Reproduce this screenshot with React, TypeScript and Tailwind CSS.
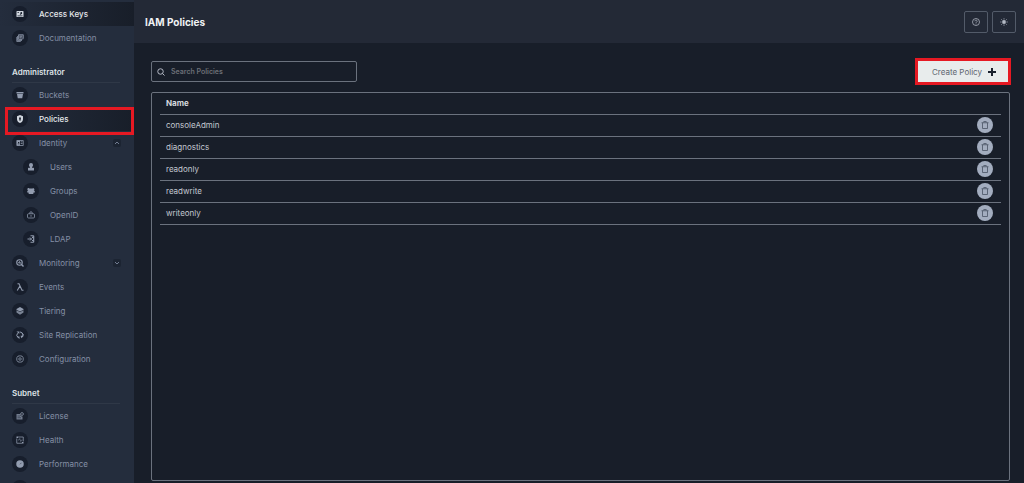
import { type ReactNode } from 'react';
import clsx from 'clsx';

interface NavItem {
  label: string;
  icon: IconName;
  active?: boolean;
  marked?: boolean;
  iconOnly?: boolean;
  toggle?: 'open' | 'closed';
  children?: NavItem[];
}

interface NavGroup {
  title?: string;
  items: NavItem[];
}

const stroke = { fill: 'none', stroke: 'currentColor', strokeWidth: 1.5 } as const;

const icons = {
  accessKeys: (
    <path
      fillRule="evenodd"
      d="M2 2h12a1 1 0 0 1 1 1v10a1 1 0 0 1-1 1H2a1 1 0 0 1-1-1V3a1 1 0 0 1 1-1Zm1 2v1.500h3V4H3Zm7.500.2a2 2 0 0 0-1.600 3.200L7.500 8.800l1 1 1.500-1.500a2 2 0 1 0 .5-4.100ZM3 11v1.300h10V11H3Z"
    />
  ),
  docs: (
    <>
      <path d="M5 1h10v10H5z" opacity="0.35" />
      <path {...stroke} d="M5 1.500h9.500v7l-2.500 2.500H5zM3 4v9h9M1.500 6v9h8M7 4.500h5M7 7.500h4" />
    </>
  ),
  bucket: <path d="M1 2h14v3H1zM2 6h12l-1.500 8.500h-9z" />,
  policy: (
    <path
      fillRule="evenodd"
      d="M8 0l6 2.500v6c0 4-3 6.500-6 7.500-3-1-6-3.500-6-7.500v-6L8 0Zm0 4.500a2 2 0 0 0-1.200 3.600L6.300 11h3.400l-.5-2.900A2 2 0 0 0 8 4.500Z"
    />
  ),
  identity: (
    <>
      <path {...stroke} d="M1.500 3h13v10h-13z" />
      <path d="M2 3h6v10H2zM9.500 5H13v1.500H9.500zM9.500 8H13v1.500H9.500z" />
      <path className="text-[#171e2c]" fill="currentColor" d="M4 6h2.500v2H4zM3.500 9H7v1.500H3.500z" />
    </>
  ),
  user: (
    <path d="M8 0a4 4 0 0 1 4 4c0 2-1 3.300-2 4v1.500h3a1 1 0 0 1 1 1V15H2v-4.500a1 1 0 0 1 1-1h3V8C5 7.300 4 6 4 4a4 4 0 0 1 4-4Z" />
  ),
  groups: (
    <path d="M3.500 2A2.200 2.200 0 0 1 5.700 4a3 3 0 0 1 4.600 0 2.200 2.200 0 1 1 3.200 2.500L15.500 8v3H13l-.5 3h-9L3 11H.5V8l2-1.500A2.300 2.300 0 0 1 3.500 2Z" />
  ),
  openId: (
    <path
      {...stroke}
      d="M5.500 5.500V4a2.500 2.500 0 0 1 5 0v1.500M3 5.500h10a2 2 0 0 1 2 2v4.500a2 2 0 0 1-2 2H3a2 2 0 0 1-2-2V7.500a2 2 0 0 1 2-2ZM8 8v3.500"
    />
  ),
  ldap: (
    <>
      <path {...stroke} strokeWidth="2" d="M7 1.500h6.500v13H7M1 8h8M6 5l3 3-3 3M10 5h3M10 11h3" />
      <path d="M10.500 2H14v12h-2V8z" opacity="0.6" />
    </>
  ),
  monitoring: (
    <>
      <circle cx="7" cy="7" r="5.500" {...stroke} strokeWidth="2.200" />
      <path {...stroke} strokeWidth="2.800" d="M11 11l4 4" />
      <path {...stroke} strokeWidth="2" d="M4 7.500h1.500L7 5l1 4 1-1.500h1.500" />
    </>
  ),
  events: <path {...stroke} strokeWidth="2.200" d="M3 1.500h3l6 13h3M7.800 6L2.500 15" />,
  tiering: (
    <>
      <path d="M8 0l7 4v1.500L8 9 1 5.500V4z" />
      <path d="M1 6.500l7 3.500 7-3.500V11l-7 4.500L1 11z" opacity="0.8" />
    </>
  ),
  replication: (
    <>
      <path {...stroke} strokeWidth="2" d="M4.500 13A6 6 0 0 1 3 4.500M7.500 2a6 6 0 0 1 6 7M11.500 3A6 6 0 0 1 13 11.500" />
      <path d="M1 11h6v5zM9 9.500h6.500l-4.500 5zM1 1h5.500v5z" />
    </>
  ),
  settings: (
    <>
      <path
        {...stroke}
        d="M8 1l1.800 1.200 2.200-.2.800 2.100 1.900 1.200L14.200 8l.5 2.700-1.900 1.200L12 14l-2.200-.2L8 15l-1.800-1.200L4 14l-.8-2.100-1.900-1.200L1.800 8l-.5-2.700 1.900-1.200L4 2l2.200.2z"
      />
      <circle cx="8" cy="8" r="2.500" {...stroke} />
    </>
  ),
  license: (
    <>
      <path d="M1 4h7.500A4 4 0 0 0 13 9v6H1z" opacity="0.75" />
      <circle cx="12" cy="4" r="2.800" {...stroke} />
      <path {...stroke} className="text-[#171e2c]" strokeWidth="1" d="M3 8h5M3 11.500h7" />
    </>
  ),
  health: (
    <>
      <path {...stroke} d="M4 2h10.500v9M12 14.500H1.500V5" />
      <path {...stroke} d="M4 8h2l1.500-3 2 6L11 8h2" opacity="0.6" />
      <path d="M1 1h3v3H1zM12 12h3v3h-3z" />
    </>
  ),
  performance: (
    <>
      <circle cx="8" cy="8" r="7.500" />
      <path {...stroke} className="text-[#171e2c]" strokeWidth="1" d="M8 8.500L11 5.500" />
    </>
  ),
  profile: <circle cx="8" cy="8" r="6.500" {...stroke} />,
} satisfies Record<string, ReactNode>;

type IconName = keyof typeof icons;

const navGroups: NavGroup[] = [
  {
    items: [
      { label: 'Access Keys', icon: 'accessKeys', active: true },
      { label: 'Documentation', icon: 'docs' },
    ],
  },
  {
    title: 'Administrator',
    items: [
      { label: 'Buckets', icon: 'bucket' },
      { label: 'Policies', icon: 'policy', active: true, marked: true },
      {
        label: 'Identity',
        icon: 'identity',
        toggle: 'open',
        children: [
          { label: 'Users', icon: 'user' },
          { label: 'Groups', icon: 'groups' },
          { label: 'OpenID', icon: 'openId' },
          { label: 'LDAP', icon: 'ldap' },
        ],
      },
      { label: 'Monitoring', icon: 'monitoring', toggle: 'closed' },
      { label: 'Events', icon: 'events' },
      { label: 'Tiering', icon: 'tiering' },
      { label: 'Site Replication', icon: 'replication' },
      { label: 'Configuration', icon: 'settings' },
    ],
  },
  {
    title: 'Subnet',
    items: [
      { label: 'License', icon: 'license' },
      { label: 'Health', icon: 'health' },
      { label: 'Performance', icon: 'performance' },
      { label: 'Profile', icon: 'profile', iconOnly: true },
    ],
  },
];

const policies = ['consoleAdmin', 'diagnostics', 'readonly', 'readwrite', 'writeonly'];

export default function App() {
  return (
    <div className="flex h-screen overflow-hidden bg-[#181e29] font-['Inter',sans-serif] text-[8px] leading-3 text-[#c3c8d0]">
      <Sidebar />
      <main className="flex min-w-0 flex-1 flex-col">
        <PageHeader />
        <div className="flex min-h-0 flex-1 flex-col gap-2.5 pt-[18px] pr-3.5 pb-0.5 pl-[17px]">
          <Toolbar />
          <PolicyTable />
        </div>
      </main>
    </div>
  );
}

const Sidebar = () => (
  <nav className="w-[134px] shrink-0 bg-[#242d3d] pt-0.5">
    {navGroups.map((group, idx) => (
      <section key={idx}>
        {group.title && (
          <h2 className="mr-3.5 ml-3 flex h-[33px] items-end border-b border-[#2f3847] pb-1 font-semibold text-[#dde1e6]">
            {group.title}
          </h2>
        )}
        <NavList items={group.items} />
      </section>
    ))}
  </nav>
);

const NavList = ({ items, nested }: { items: NavItem[]; nested?: boolean }) => (
  <ul>
    {items.map(item => (
      <li key={item.label} className="relative">
        <a
          href="#"
          aria-label={item.label}
          className={clsx(
            'flex h-6 items-center gap-[11px] pr-[13px]',
            nested ? 'pl-[23px]' : 'pl-3',
            item.active
              ? 'bg-linear-to-r from-[#242d3d] to-[#181e29] font-medium text-[#e6e9ed]'
              : 'text-[#8590a6]'
          )}>
          <span className="grid size-4 shrink-0 place-items-center rounded-full bg-[#171e2c]">
            <Icon name={item.icon} active={item.active} />
          </span>
          {!item.iconOnly && <span className="flex-1">{item.label}</span>}
          {item.toggle && <Chevron open={item.toggle === 'open'} />}
        </a>
        {item.marked && (
          <span className="pointer-events-none absolute top-0 right-0 -bottom-1 left-[5px] border-[3px] border-[#e61923]" />
        )}
        {item.children && <NavList items={item.children} nested />}
      </li>
    ))}
  </ul>
);

const Icon = ({ name, active }: { name: IconName; active?: boolean }) => (
  <svg
    viewBox="0 0 16 16"
    fill="currentColor"
    className={clsx('size-2', active ? 'text-[#cfd5dd]' : 'text-[#929caf]')}>
    {icons[name]}
  </svg>
);

const Chevron = ({ open }: { open: boolean }) => (
  <span className="grid size-2 place-items-center rounded-xs bg-[#1c2432]">
    <svg viewBox="0 0 8 8" className="size-2 text-[#717c91]" {...stroke} strokeWidth={1}>
      <path d={open ? 'M2 5l2-2 2 2' : 'M2 3l2 2 2-2'} />
    </svg>
  </span>
);

const PageHeader = () => (
  <header className="flex h-[43px] shrink-0 items-center justify-between bg-[#232936] pr-2 pl-[11px]">
    <h1 className="text-[10px] font-bold text-[#f0f2f4]">IAM Policies</h1>
    <div className="flex gap-1">
      <HeaderButton label="Help">
        <circle cx="8" cy="8" r="7" {...stroke} />
        <path {...stroke} d="M5.800 6.500a2.200 2.200 0 1 1 3.400 1.800L8 9.500v.8M8 11.300v1.400" />
      </HeaderButton>
      <HeaderButton label="Toggle theme">
        <circle cx="8" cy="8" r="3.800" />
        <path
          {...stroke}
          d="M8 .5v2.500M8 13v2.500M.5 8H3M13 8h2.500M2.700 2.700l1.800 1.800M11.500 11.500l1.800 1.800M2.700 13.300l1.800-1.800M11.500 4.500l1.800-1.800"
        />
      </HeaderButton>
    </div>
  </header>
);

const HeaderButton = ({ label, children }: { label: string; children: ReactNode }) => (
  <button
    type="button"
    aria-label={label}
    className="grid h-[22px] w-6 place-items-center rounded-xs border border-[#535b69] text-[#b4bac5]">
    <svg viewBox="0 0 16 16" fill="currentColor" className="size-2">
      {children}
    </svg>
  </button>
);

const Toolbar = () => (
  <div className="flex h-[21px] shrink-0 items-center justify-between">
    <label className="flex h-[21px] w-[206px] items-center gap-1.5 rounded-xs border border-[#6b727e] px-[5px]">
      <svg viewBox="0 0 16 16" className="size-2 text-[#b4bac5]" {...stroke} strokeWidth={2}>
        <circle cx="7" cy="7" r="5.500" />
        <path d="M11 11l4 4" />
      </svg>
      <input
        type="text"
        aria-label="Search Policies"
        placeholder="Search Policies"
        className="min-w-0 flex-1 bg-transparent text-[7px] font-semibold outline-none placeholder:text-[#6c7077]"
      />
    </label>
    <button
      type="button"
      className="-mr-px flex h-[27px] items-center gap-1.5 border-[3px] border-[#e61923] bg-[#e8ecec] pr-3 pl-3.5 text-[#5f6670]">
      Create Policy
      <svg viewBox="0 0 8 8" className="size-2 text-[#1b222e]" {...stroke} strokeWidth={2}>
        <path d="M4 0v8M0 4h8" />
      </svg>
    </button>
  </div>
);

const PolicyTable = () => (
  <div className="min-h-0 flex-1 rounded-xs border border-[#6b727e] px-2">
    <table className="w-full text-left">
      <thead>
        <tr className="h-[21px] border-b border-[#6b727e]">
          <th className="pl-1.5 font-bold text-[#d5d9df]">Name</th>
          <td className="w-8" />
        </tr>
      </thead>
      <tbody>
        {policies.map(policy => (
          <tr key={policy} className="h-[22px] border-b border-[#6b727e]">
            <td className="pl-1.5">{policy}</td>
            <td className="pl-2">
              <button
                type="button"
                aria-label={`Delete ${policy}`}
                className="grid size-4 place-items-center rounded-full bg-[#a3adbf] text-[#525c6d]">
                <svg viewBox="0 0 16 16" className="size-2" {...stroke} strokeWidth={1.8}>
                  <path d="M1 3.500h14M5.500 3V1h5v2M3 3.500V15h10V3.500" />
                </svg>
              </button>
            </td>
          </tr>
        ))}
      </tbody>
    </table>
  </div>
);
